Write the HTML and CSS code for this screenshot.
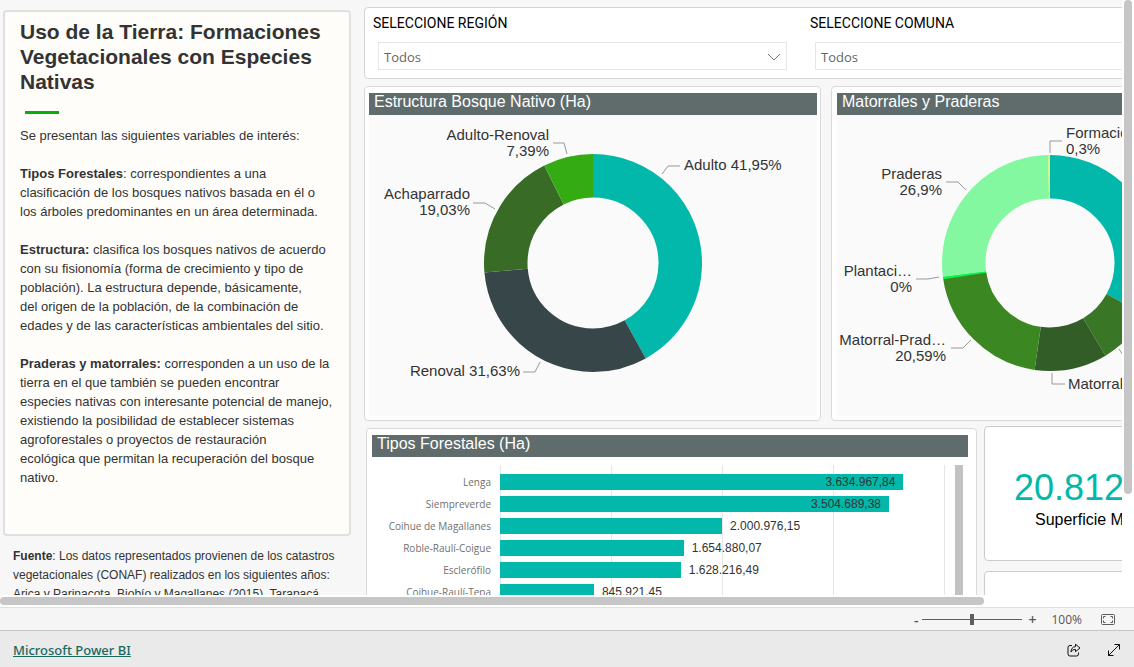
FILE: index.html
```html
<!DOCTYPE html>
<html lang="es">
<head>
<meta charset="utf-8">
<title>Uso de la Tierra</title>
<link rel="stylesheet" href="styles.css">
</head>
<body>
<div class="app">
  <div class="viewport">
    <div class="clip">
      <div class="report">
        <aside class="sidebar">
          <section class="card intro">
            <h1>Uso de la Tierra: Formaciones<br>Vegetacionales con Especies<br>Nativas</h1>
            <div class="accent"></div>
            <p>Se presentan las siguientes variables de interés:</p>
            <p><b>Tipos Forestales</b>: correspondientes a una<br>clasificación de los bosques nativos basada en él o<br>los árboles predominantes en un área determinada.</p>
            <p><b>Estructura:</b> clasifica los bosques nativos de acuerdo<br>con su fisionomía (forma de crecimiento y tipo de<br>población). La estructura depende, básicamente,<br>del origen de la población, de la combinación de<br>edades y de las características ambientales del sitio.</p>
            <p><b>Praderas y matorrales:</b> corresponden a un uso de la<br>tierra en el que también se pueden encontrar<br>especies nativas con interesante potencial de manejo,<br>existiendo la posibilidad de establecer sistemas<br>agroforestales o proyectos de restauración<br>ecológica que permitan la recuperación del bosque<br>nativo.</p>
          </section>
          <p class="source"><b>Fuente</b>: Los datos representados provienen de los catastros<br>vegetacionales (CONAF) realizados en los siguientes años:<br>Arica y Parinacota, Biobío y Magallanes (2015), Tarapacá</p>
        </aside>
        <main class="content">
          <section class="card filters">
            <div class="filter">
              <label for="region">SELECCIONE REGIÓN</label>
              <div class="select-box">
                <select id="region"><option>Todos</option></select>
                <svg class="chevron" width="14" height="8" viewBox="0 0 14 8"><path d="M1 1l6 6 6-6"/></svg>
              </div>
            </div>
            <div class="filter">
              <label for="comuna">SELECCIONE COMUNA</label>
              <div class="select-box">
                <select id="comuna"><option>Todos</option></select>
                <svg class="chevron" width="14" height="8" viewBox="0 0 14 8"><path d="M1 1l6 6 6-6"/></svg>
              </div>
            </div>
          </section>
          <div class="row donuts">
            <section class="card visual">
              <h2>Estructura Bosque Nativo (Ha)</h2>
              <div class="plot">
                <svg class="donut" width="448" height="301" viewBox="0 0 448 301">
                  <g class="ring" transform="rotate(-90 224 148)">
                    <circle class="teal" cx="224" cy="148" r="87.25" pathLength="100" stroke-dasharray="41.95 100"/>
                    <circle class="slate" cx="224" cy="148" r="87.25" pathLength="100" stroke-dasharray="31.63 100" stroke-dashoffset="-41.95"/>
                    <circle class="forest" cx="224" cy="148" r="87.25" pathLength="100" stroke-dasharray="19.03 100" stroke-dashoffset="-73.58"/>
                    <circle class="lime" cx="224" cy="148" r="87.25" pathLength="100" stroke-dasharray="7.39 100" stroke-dashoffset="-92.61"/>
                  </g>
                  <path class="leader" d="M293 59l6-8h12M184 28h11l3 11M104 88h12l10 6M154 257h12l5-10"/>
                  <text x="315" y="55">Adulto 41,95%</text>
                  <g class="end">
                    <text x="180" y="25">Adulto-Renoval</text>
                    <text x="180" y="41">7,39%</text>
                    <text x="101" y="84">Achaparrado</text>
                    <text x="101" y="100">19,03%</text>
                    <text x="151" y="261">Renoval 31,63%</text>
                  </g>
                </svg>
              </div>
            </section>
            <section class="card visual">
              <h2>Matorrales y Praderas</h2>
              <div class="plot">
                <svg class="donut" width="428" height="301" viewBox="0 0 428 301">
                  <g class="ring" transform="rotate(-90 213 148)">
                    <circle class="teal" cx="213" cy="148" r="86.25" pathLength="100" stroke-dasharray="33 100"/>
                    <circle class="moss" cx="213" cy="148" r="86.25" pathLength="100" stroke-dasharray="8.4 100" stroke-dashoffset="-33"/>
                    <circle class="pine" cx="213" cy="148" r="86.25" pathLength="100" stroke-dasharray="10.9 100" stroke-dashoffset="-41.4"/>
                    <circle class="leaf" cx="213" cy="148" r="86.25" pathLength="100" stroke-dasharray="20.5 100" stroke-dashoffset="-52.3"/>
                    <circle class="neon" cx="213" cy="148" r="86.25" pathLength="100" stroke-dasharray="0.4 100" stroke-dashoffset="-72.6"/>
                    <circle class="mint" cx="213" cy="148" r="86.25" pathLength="100" stroke-dasharray="26.8 100" stroke-dashoffset="-72.95"/>
                    <circle class="lemon" cx="213" cy="148" r="86.25" pathLength="100" stroke-dasharray="0.3 100" stroke-dashoffset="-99.7"/>
                  </g>
                  <path class="leader" d="M213 38V26h12M109 67h12l8 8M79 164h12l11-2M114 233h12l8-8M215 258v11h13M282 234l4 6"/>
                  <text x="229" y="23">Formacio</text>
                  <text x="229" y="39">0,3%</text>
                  <text x="231" y="274">Matorral</text>
                  <g class="end">
                    <text x="105" y="64">Praderas</text>
                    <text x="105" y="80">26,9%</text>
                    <text x="75" y="161">Plantaci…</text>
                    <text x="75" y="177">0%</text>
                    <text x="109" y="230">Matorral-Prad…</text>
                    <text x="109" y="246">20,59%</text>
                  </g>
                </svg>
              </div>
            </section>
          </div>
          <div class="row lower">
            <section class="card visual bars">
              <h2>Tipos Forestales (Ha)</h2>
              <div class="bar-chart">
                <div class="names">
                  <span>Lenga</span><span>Siempreverde</span><span>Coihue de Magallanes</span><span>Roble-Raulí-Coigue</span><span>Esclerófilo</span><span>Coihue-Raulí-Tepa</span>
                </div>
                <div class="tracks">
                  <div class="track"><div class="bar" style="width:90.87%"><span>3.634.967,84</span></div></div>
                  <div class="track"><div class="bar" style="width:87.62%"><span>3.504.689,38</span></div></div>
                  <div class="track"><div class="bar" style="width:50.02%"></div><span>2.000.976,15</span></div>
                  <div class="track"><div class="bar" style="width:41.37%"></div><span>1.654.880,07</span></div>
                  <div class="track"><div class="bar" style="width:40.71%"></div><span>1.628.216,49</span></div>
                  <div class="track"><div class="bar" style="width:21.15%"></div><span>845.921,45</span></div>
                </div>
                <div class="inner-scroll"></div>
              </div>
            </section>
            <div class="kpis">
              <section class="card kpi">
                <strong>20.812</strong>
                <span>Superficie M</span>
              </section>
              <section class="card kpi"></section>
            </div>
          </div>
        </main>
      </div>
    </div>
    <div class="v-scroll"><div class="thumb"></div></div>
    <div class="h-scroll"><div class="thumb"></div></div>
  </div>
  <div class="zoombar">
    <button type="button" aria-label="Alejar">-</button>
    <input type="range" min="0" max="100" value="50" aria-label="Zoom">
    <button type="button" aria-label="Acercar">+</button>
    <output>100%</output>
    <button type="button" class="fit" aria-label="Ajustar a la página">
      <svg width="14" height="11" viewBox="0 0 14 11"><rect x=".5" y=".5" width="13" height="10" rx="1"/><path d="M2.500 4.500v-2h2M9.500 2.500h2v2M11.500 6.500v2h-2M4.500 8.500h-2v-2"/></svg>
    </button>
  </div>
  <footer class="footer">
    <a href="#">Microsoft Power BI</a>
    <button type="button" aria-label="Compartir">
      <svg width="14" height="14" viewBox="0 0 14 14"><path d="M5 2.500H3a2 2 0 0 0-2 2V11a2 2 0 0 0 2 2h6.500a2 2 0 0 0 2-2v-1.500"/><path d="M8.500 1.200 13 5 8.500 8.700V6.500C6 6.500 5 7.300 4 9c0-3 1.500-5.200 4.500-5.400z"/></svg>
    </button>
    <button type="button" aria-label="Pantalla completa">
      <svg width="14" height="14" viewBox="0 0 14 14"><path d="M1.500 12.500l11-11M7.500 1.500h5v5M1.500 7.500v5h5"/></svg>
    </button>
  </footer>
</div>
</body>
</html>
```

FILE: styles.css
```css
* { box-sizing: border-box; }
body { margin: 0; font-family: "Liberation Sans", Arial, sans-serif; color: #333; }
h1, h2, p { margin: 0; }
button { border: 0; padding: 0; background: none; color: inherit; font: inherit; display: flex; }
.app { height: 100vh; display: flex; flex-direction: column; overflow: hidden; }

.viewport { flex: 1; min-height: 0; display: grid; grid-template-columns: minmax(0, 1fr) 12px; grid-template-rows: minmax(0, 1fr) 12px; background: #fff; }
.clip { overflow: hidden; background: #f7f7f7; }
.report { width: 114%; display: grid; grid-template-columns: 364px minmax(0, 1fr); background: #f7f7f7; }
.v-scroll { padding: 0 2px; }
.v-scroll .thumb { height: 83%; border-radius: 4px; background: #c6c6c6; }
.h-scroll { padding: 2px 0; }
.h-scroll .thumb { width: 87.7%; height: 8px; border-radius: 4px; background: #c6c6c6; }

.card { border: 1px solid #d4d4d4; border-radius: 4px; background: #fff; }

.sidebar { padding: 10px 13px 0 3px; font-size: 13px; line-height: 19px; white-space: nowrap; }
.intro { min-height: 526px; padding: 7px 0 0 15px; border: 2px solid #e0e0e0; background: #fffdf9; }
.intro h1 { font-size: 21px; line-height: 25px; }
.intro .accent { width: 34px; height: 3px; margin: 17px 0 12px 5px; background: #0bad0b; }
.intro p { margin-bottom: 19px; }
.source { padding: 11px 0 0 10px; font-size: 12px; }

.content { display: flex; flex-direction: column; gap: 7px; padding: 7px 8px 0 0; min-width: 0; }
.filters { display: grid; grid-template-columns: 437px 437px; padding: 6px 9px 9px 8px; height: 72px; }
.filter label { display: block; color: #000; font: 400 14px/18px Roboto, sans-serif; }
.select-box { position: relative; margin: 10px 23px 0 5px; }
.select-box select { display: block; width: 100%; height: 28px; padding: 2px 5px 0; border: 1px solid #e6e6e6; border-radius: 0; background: #fff; color: #666; font: 13px "Open Sans", sans-serif; appearance: none; }
.chevron { position: absolute; right: 6px; top: 11px; fill: none; stroke: #777; pointer-events: none; }

.row { display: grid; }
.donuts { grid-template-columns: 457fr 440fr; gap: 10px; }
.visual { padding: 6px 3px 4px 4px; border-color: #d9d9d9; min-width: 0; }
.donuts .visual + .visual { padding-left: 5px; }
.visual h2 { height: 22px; padding-left: 5px; background: #606c6c; color: #fff; font-size: 16px; font-weight: 400; line-height: 18px; }
.plot { background: #fafafa; overflow: hidden; }
.donut { display: block; font-size: 15px; fill: #333; }
.donut .end { text-anchor: end; }
.ring { fill: none; stroke-width: 43.500px; }
.teal { stroke: #01b8aa; }
.slate { stroke: #374649; }
.forest { stroke: #376b26; }
.lime { stroke: #35ab13; }
.moss { stroke: #397625; }
.pine { stroke: #325d26; }
.leaf { stroke: #3b8722; }
.neon { stroke: #0cf24a; }
.mint { stroke: #83f8a0; }
.lemon { stroke: #d8f878; }
.leader { fill: none; stroke: #999; }

.lower { grid-template-columns: 611px minmax(0, 1fr); gap: 7px; padding-left: 2px; height: 284px; }
.bars { padding: 6px 8px 4px 5px; overflow: hidden; }
.bar-chart { display: grid; grid-template-columns: 119px minmax(0, 1fr) 8px; column-gap: 9px; margin: 8px 5px 0 0; height: 240px; }
.names { display: flex; flex-direction: column; padding-top: 6px; text-align: right; color: #707070; font: 10px/22px "Open Sans", sans-serif; white-space: nowrap; }
.tracks { margin-right: 1px; padding-top: 6px; border-right: 1px solid #e6e6e6; background: linear-gradient(to right, #e6e6e6 1px, transparent 1px) 0 0 / 25% 100%; }
.track { display: flex; align-items: center; gap: 8px; height: 22px; font-size: 12px; white-space: nowrap; }
.bar { display: flex; align-items: center; justify-content: flex-end; height: 16px; padding-right: 8px; background: #01b8aa; }
.inner-scroll { background: #c2c2c2; }

.kpis { display: flex; flex-direction: column; gap: 10px; margin-top: -2px; }
.kpi { height: 135px; padding: 40px 0 0 29px; border-color: #ccc; overflow: hidden; white-space: nowrap; }
.kpi strong { display: block; color: #01b8aa; font-size: 36px; font-weight: 400; line-height: 42px; }
.kpi span { display: block; padding-left: 21px; color: #000; font-size: 16px; line-height: 22px; }

.zoombar { display: flex; align-items: center; justify-content: flex-end; height: 23px; padding-right: 19px; border-top: 1px solid #e1e1e1; background: #f5f5f5; color: #555; font: 12px "Open Sans", sans-serif; }
.zoombar button { font-size: 14px; font-weight: 600; }
.zoombar input { appearance: none; width: 100px; height: 11px; margin: 0 6px 0 4px; background: linear-gradient(#605e5c, #605e5c) center / 100% 1px no-repeat; }
.zoombar input::-webkit-slider-thumb { appearance: none; width: 4px; height: 11px; background: #605e5c; }
.zoombar output { margin: 0 19px 0 15px; }
.fit svg { fill: none; stroke: #605e5c; }
.footer { display: flex; align-items: center; gap: 26px; height: 37px; padding: 2px 13px 0; border-top: 1px solid #c6c6c6; background: #eaeaea; }
.footer a { margin-right: auto; color: #17695f; font: 500 13px "Noto Sans", sans-serif; }
.footer svg { fill: none; stroke: #111; }
```
